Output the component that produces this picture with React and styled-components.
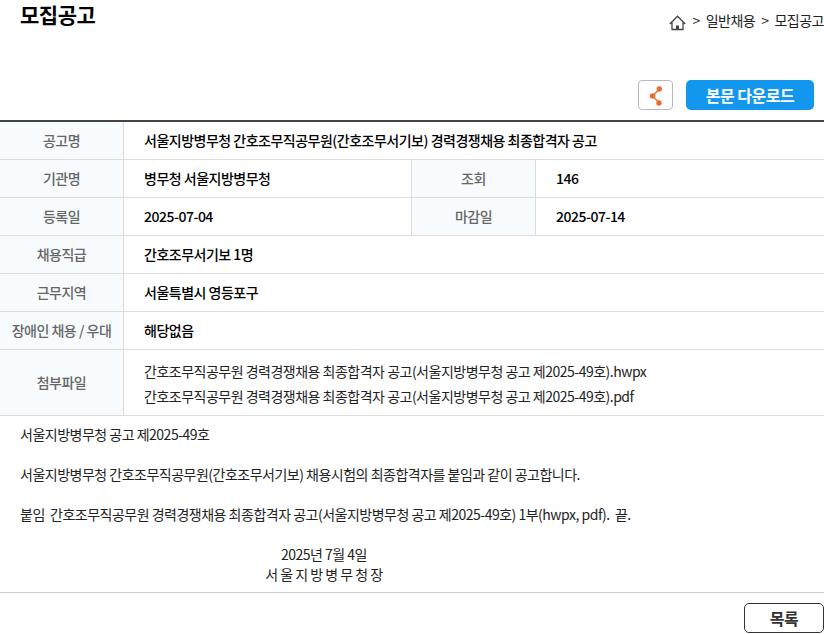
import React from "react";
import styled, { createGlobalStyle } from "styled-components";

const Global = createGlobalStyle`
  * { box-sizing: border-box; }
  body {
    margin: 0;
    background: #fff;
    color: #222;
    font: 400 14px/20px "Noto Sans CJK KR", sans-serif;
    letter-spacing: -0.5px;
  }
`;

const Header = styled.header`
  display: flex;
  justify-content: space-between;
  align-items: flex-start;
  height: 80px;
  padding-left: 20px;
`;
const Title = styled.h1`
  margin: 0;
  font-size: 21px;
  line-height: 28px;
  font-weight: 700;
  color: #000;
`;
const Crumbs = styled.nav`
  display: flex;
  align-items: flex-start;
  gap: 6px;
  padding-top: 10px;
  a { color: inherit; text-decoration: none; }
`;
const HomeLink = styled.a`
  display: flex;
  padding-top: 5px;
`;
const Actions = styled.div`
  display: flex;
  justify-content: flex-end;
  gap: 13px;
  padding: 0 10px 10px 0;
`;
const ShareButton = styled.button`
  display: flex;
  align-items: center;
  justify-content: center;
  width: 35px;
  height: 30px;
  padding: 2px 0 0;
  background: #fff;
  border: 1px solid #b8b8c2;
  border-radius: 4px;
`;
const DownloadButton = styled.button`
  width: 128px;
  height: 30px;
  padding: 0;
  border: 0;
  border-radius: 5px;
  background: #1296ee;
  color: #fff;
  font: 700 16px/30px "Noto Sans CJK KR", sans-serif;
  letter-spacing: -0.5px;
`;
const Table = styled.table`
  width: 100%;
  table-layout: fixed;
  border-collapse: separate;
  border-spacing: 0;
  border-top: 2px solid #444;
`;
const HeadCol = styled.col`
  width: 124px;
`;
const Label = styled.th`
  height: 38px;
  padding: 0 0 2px;
  background: #f7fbfe;
  border-right: 1px solid #ddd;
  border-bottom: 1px solid #ddd;
  color: #666;
  font-weight: 500;
`;
const Value = styled.td`
  padding: ${(p) => (p.$files ? "9px 20px 6px" : "0 20px 2px")};
  border-bottom: 1px solid #ddd;
  color: ${(p) => (p.$files ? "#222" : "#000")};
  font-weight: ${(p) => (p.$files ? 400 : 500)};
  &:not(:last-child) { border-right: 1px solid #ddd; }
`;
const FileLink = styled.a`
  display: block;
  line-height: 25px;
  color: inherit;
  text-decoration: none;
`;
const Body = styled.article`
  padding: 8px 20px;
  border-bottom: 1px solid #ccc;
`;
const Para = styled.p`
  margin: 0 0 20px;
  white-space: pre-wrap;
`;
const Signature = styled.p`
  width: 608px;
  max-width: 100%;
  margin: 0;
  text-align: center;
`;
const Footer = styled.footer`
  display: flex;
  justify-content: flex-end;
  padding-top: 10px;
`;
const ListButton = styled.button`
  width: 80px;
  height: 30px;
  padding: 0;
  border: 1px solid #333;
  border-radius: 5px;
  background: #fff;
  color: #333;
  font: 700 16px/28px "Noto Sans CJK KR", sans-serif;
  letter-spacing: -0.5px;
`;

const HomeIcon = () => (
  <svg width="17" height="16" viewBox="0 0 17 16" fill="none" stroke="#444" strokeWidth="1.3">
    <path d="M.8 9L8.5 1.2L16.2 9M3 7.5V14.5H14V7.5" />
    <path d="M8.5 10.5V14.5" strokeWidth="3" />
  </svg>
);
const ShareIcon = () => (
  <svg width="14" height="20" viewBox="0 0 14 20" fill="#ee6a2f">
    <path d="M10.5 3L3.5 10L10.5 17" fill="none" stroke="#ee6a2f" strokeWidth="1.4" />
    <circle cx="10.3" cy="3" r="2.7" />
    <circle cx="3.5" cy="10" r="2.7" />
    <circle cx="10" cy="17" r="2.7" />
  </svg>
);

const Single = ({ label, children }) => (
  <tr>
    <Label scope="row">{label}</Label>
    <Value colSpan={3}>{children}</Value>
  </tr>
);
const Pair = ({ items }) => (
  <tr>
    {items.map(([label, value]) => (
      <React.Fragment key={label}>
        <Label scope="row">{label}</Label>
        <Value>{value}</Value>
      </React.Fragment>
    ))}
  </tr>
);

export default function App() {
  return (
    <>
      <Global />
      <Header>
        <Title>모집공고</Title>
        <Crumbs aria-label="현재 위치">
          <HomeLink href="#home" aria-label="홈"><HomeIcon /></HomeLink>
          <span>&gt;</span>
          <a href="#jobs">일반채용</a>
          <span>&gt;</span>
          <a href="#notices">모집공고</a>
        </Crumbs>
      </Header>
      <main>
        <Actions>
          <ShareButton type="button" aria-label="공유"><ShareIcon /></ShareButton>
          <DownloadButton type="button">본문 다운로드</DownloadButton>
        </Actions>
        <Table>
          <colgroup><HeadCol /><col /><HeadCol /><col /></colgroup>
          <tbody>
            <Single label="공고명">서울지방병무청 간호조무직공무원(간호조무서기보) 경력경쟁채용 최종합격자 공고</Single>
            <Pair items={[["기관명", "병무청 서울지방병무청"], ["조회", "146"]]} />
            <Pair items={[["등록일", "2025-07-04"], ["마감일", "2025-07-14"]]} />
            <Single label="채용직급">간호조무서기보 1명</Single>
            <Single label="근무지역">서울특별시 영등포구</Single>
            <Single label="장애인 채용 / 우대">해당없음</Single>
            <tr>
              <Label scope="row">첨부파일</Label>
              <Value colSpan={3} $files>
                <FileLink href="#hwpx">간호조무직공무원 경력경쟁채용 최종합격자 공고(서울지방병무청 공고 제2025-49호).hwpx</FileLink>
                <FileLink href="#pdf">간호조무직공무원 경력경쟁채용 최종합격자 공고(서울지방병무청 공고 제2025-49호).pdf</FileLink>
              </Value>
            </tr>
          </tbody>
        </Table>
        <Body>
          <Para>서울지방병무청 공고 제2025-49호</Para>
          <Para>서울지방병무청 간호조무직공무원(간호조무서기보) 채용시험의 최종합격자를 붙임과 같이 공고합니다.</Para>
          <Para>{"붙임  간호조무직공무원 경력경쟁채용 최종합격자 공고(서울지방병무청 공고 제2025-49호) 1부(hwpx, pdf).  끝."}</Para>
          <Signature>2025년 7월 4일</Signature>
          <Signature>서 울 지 방 병 무 청 장</Signature>
        </Body>
      </main>
      <Footer><ListButton type="button">목록</ListButton></Footer>
    </>
  );
}
